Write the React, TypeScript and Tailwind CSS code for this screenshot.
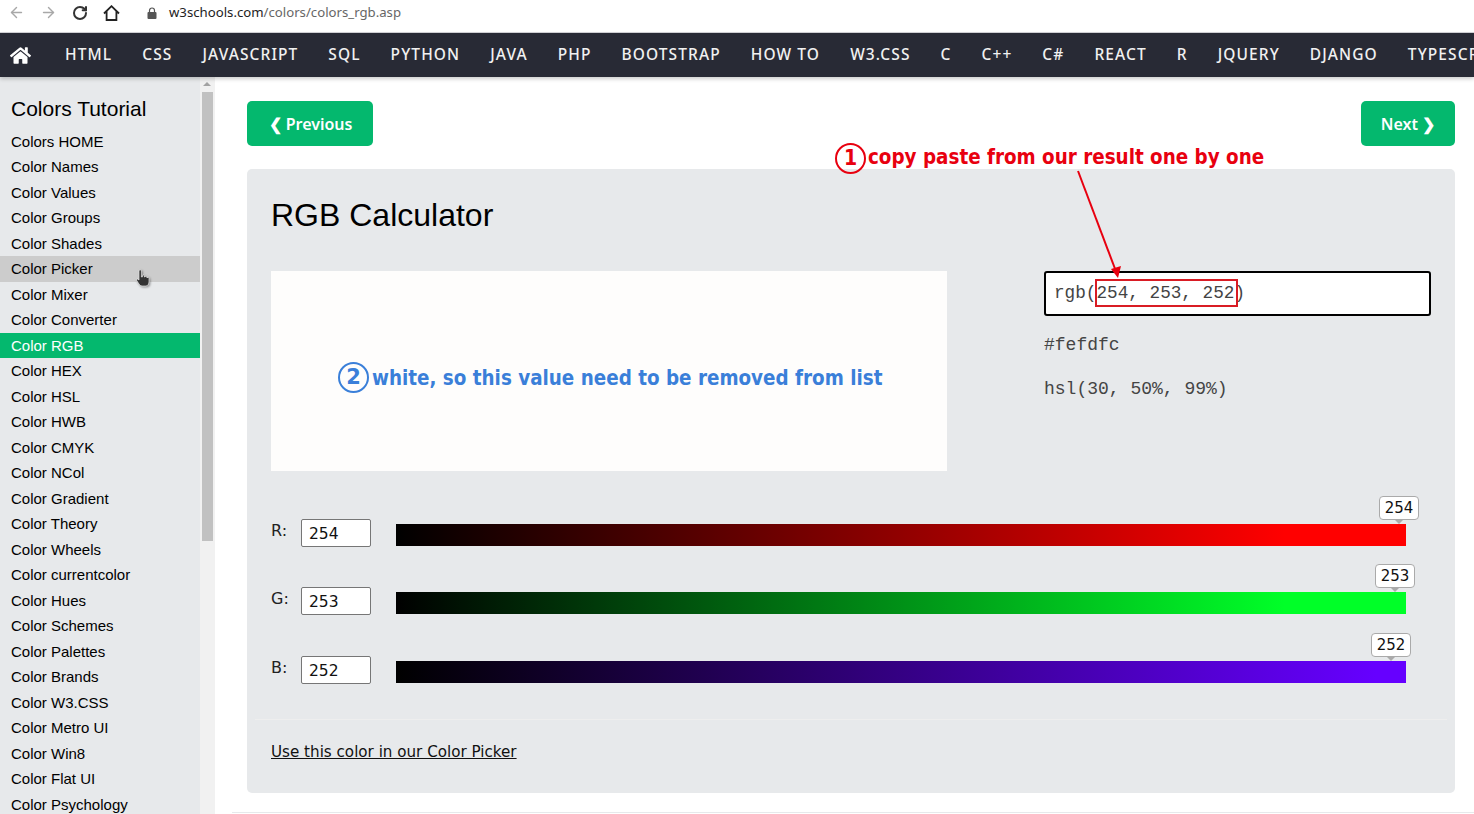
import React from 'react';
import { ArrowLeft, ArrowRight, RotateCw } from 'lucide-react';
import { FaHome } from 'react-icons/fa';

const navItems = ['HTML', 'CSS', 'JAVASCRIPT', 'SQL', 'PYTHON', 'JAVA', 'PHP', 'BOOTSTRAP', 'HOW TO', 'W3.CSS', 'C', 'C++', 'C#', 'REACT', 'R', 'JQUERY', 'DJANGO', 'TYPESCRIPT'];

const sideItems = ['Colors HOME', 'Color Names', 'Color Values', 'Color Groups', 'Color Shades', 'Color Picker', 'Color Mixer', 'Color Converter', 'Color RGB', 'Color HEX', 'Color HSL', 'Color HWB', 'Color CMYK', 'Color NCol', 'Color Gradient', 'Color Theory', 'Color Wheels', 'Color currentcolor', 'Color Hues', 'Color Schemes', 'Color Palettes', 'Color Brands', 'Color W3.CSS', 'Color Metro UI', 'Color Win8', 'Color Flat UI', 'Color Psychology'];

const sliders = [
    { label: 'R:', value: 254, bar: 'bg-[linear-gradient(to_right,#000000_0%,#ff0000_88%,#ff0000_100%)]', tip: 'right-[-13px]', mt: 'mt-0' },
    { label: 'G:', value: 253, bar: 'bg-[linear-gradient(to_right,#000000_0%,#00ff28_88%,#00ff28_100%)]', tip: 'right-[-9px]', mt: 'mt-10' },
    { label: 'B:', value: 252, bar: 'bg-[linear-gradient(to_right,#000000_0%,#6600ff_97%,#6600ff_100%)]', tip: 'right-[-5px]', mt: 'mt-[41px]' },
];

const App: React.FC = () => {
    return (
        <div className="relative w-[1474px] h-[814px] overflow-hidden bg-white flex flex-col font-['Liberation_Sans',sans-serif] text-black">
            {/* browser bar */}
            <div className="h-[33px] flex items-center shrink-0 pb-[7px] border-b border-[#d4d4d8]">
                <ArrowLeft className="ml-[8px] w-[17px] h-[17px] text-[#a8a8a8]" strokeWidth={2} />
                <ArrowRight className="ml-[15px] w-[17px] h-[17px] text-[#a8a8a8]" strokeWidth={2} />
                <RotateCw className="ml-[15px] w-[16px] h-[16px] text-[#333333]" strokeWidth={3} />
                <svg className="ml-[15px]" width="17" height="16" viewBox="0 0 17 16" fill="none" stroke="#222222" strokeWidth="1.8">
                    <path d="M1 8.5 L8.5 1.2 L16 8.5 M3.6 6.5 V15 H13.4 V6.5" />
                </svg>
                <svg className="ml-[27px]" width="10" height="12" viewBox="0 0 10 12">
                    <path d="M2.5 5 V3.5 a2.5 2.5 0 0 1 5 0 V5" fill="none" stroke="#555555" strokeWidth="1.2" />
                    <rect x="0.5" y="5" width="9" height="7" rx="1" fill="#555555" />
                </svg>
                <span className="ml-[12px] text-[13.2px] leading-none font-['Noto_Sans',sans-serif] text-[#222222]">
                    w3schools.com<span className="text-[#666666]">/colors/colors_rgb.asp</span>
                </span>
            </div>

            {/* top nav */}
            <div className="h-[44px] shrink-0 bg-[#282a35] flex items-center text-[#f1f1f1] overflow-hidden shadow-[0_2px_4px_rgba(0,0,0,0.2)] z-10">
                <FaHome className="ml-[10px] mr-[34px] w-[21px] h-[19px] shrink-0 text-white" />
                {navItems.map((item) => (
                    <span key={item} className="shrink-0 mr-[30px] text-[15.5px] leading-none font-medium tracking-[1.1px] font-['Noto_Sans',sans-serif] whitespace-nowrap">
                        {item}
                    </span>
                ))}
            </div>

            <div className="flex flex-1 min-h-0">
                {/* sidebar */}
                <div className="w-[200px] shrink-0 bg-[#e7e9eb] overflow-hidden pt-[19px]">
                    <h2 className="pl-[11px] text-[21px] leading-[26px] mb-[6.5px]">Colors Tutorial</h2>
                    {sideItems.map((item) => (
                        <div
                            key={item}
                            className={`relative h-[25.5px] pl-[11px] text-[15px] leading-[25.5px] whitespace-nowrap ${item === 'Color RGB' ? 'bg-[#04b86e] text-white' : item === 'Color Picker' ? 'bg-[#cccccc]' : ''}`}
                        >
                            {item}
                            {item === 'Color Picker' && (
                                <svg className="absolute left-[136px] top-[13px] drop-shadow-[1px_1px_1px_rgba(0,0,0,0.4)]" width="14" height="18" viewBox="0 0 14 18">
                                    <path
                                        d="M3 2 a1.2 1.2 0 0 1 2.4 0 V8 h1 V7 a1 1 0 0 1 2 0 V8 h.6 a1 1 0 0 1 2 .4 V9 a1 1 0 0 1 2 .3 V13 q0 4 -3 4 H6 q-2 0 -3 -2 L.7 11.5 q-.5 -1.5 1 -1.5 L3 11 Z"
                                        fill="#333333"
                                        stroke="#ffffff"
                                        strokeWidth="0.6"
                                    />
                                </svg>
                            )}
                        </div>
                    ))}
                </div>

                {/* scrollbar */}
                <div className="w-[15px] shrink-0 bg-[#f1f1f1] flex flex-col items-start">
                    <div className="ml-[3px] mt-[5px] w-0 h-0 border-x-[4px] border-x-transparent border-b-[4px] border-b-[#a3a3a3]" />
                    <div className="ml-[2px] mt-[6px] w-[11px] h-[449px] bg-[#c1c1c1]" />
                </div>

                {/* main */}
                <div className="flex-1 min-w-0 pl-[32px] pr-[19px] pt-[24px]">
                    <div className="flex justify-between">
                        <button className="w-[126px] h-[45px] pl-[1px] bg-[#04b86e] rounded-[5px] text-white text-[16px] font-semibold font-['Noto_Sans',sans-serif]">❮ Previous</button>
                        <button className="w-[94px] h-[45px] bg-[#04b86e] rounded-[5px] text-white text-[16px] font-semibold font-['Noto_Sans',sans-serif]">Next ❯</button>
                    </div>

                    <div className="mt-[23px] h-[624px] bg-[#e7e9eb] rounded-[5px] pt-[28px] font-['DejaVu_Sans',sans-serif]">
                        <h1 className="pl-[24px] text-[32px] leading-[37px] font-['Liberation_Sans',sans-serif]">RGB Calculator</h1>

                        <div className="flex mt-[37px] pl-[24px]">
                            <div className="w-[676px] h-[200px] bg-[#fefdfc]" />
                            <div className="ml-[97px] w-[387px] font-['Liberation_Mono',monospace] text-[#444444] text-[18px]">
                                <div className="h-[45px] bg-white border-2 border-black rounded-[3px] flex items-center pl-[8px] text-[17.7px]">
                                    rgb(254, 253, 252)
                                </div>
                                <div className="mt-[17px] leading-[24px]">#fefdfc</div>
                                <div className="mt-[20px] leading-[24px]">hsl(30, 50%, 99%)</div>
                            </div>
                        </div>

                        <div className="mt-[48px] pl-[24px] pr-[49px]">
                            {sliders.map((s) => (
                                <div key={s.label} className={`flex items-start h-[28px] ${s.mt}`}>
                                    <span className="w-[30px] text-[16px] leading-[24px] text-[#222222]">{s.label}</span>
                                    <div className="w-[70px] h-[28px] bg-white border border-[#767676] rounded-[2px] pl-[7px] text-[15.5px] leading-[28px] text-[#111111]">{s.value}</div>
                                    <div className={`relative ml-[25px] mt-[5px] flex-1 h-[22px] ${s.bar}`}>
                                        <div className={`absolute -top-[28px] ${s.tip} w-[40px] h-[24px] bg-white border border-[#aaaaaa] rounded-[4px] text-center text-[15px] leading-[22px] text-[#111111]`}>
                                            {s.value}
                                            <div className="absolute left-1/2 -translate-x-1/2 top-[22px] w-0 h-0 border-x-[5px] border-x-transparent border-t-[5px] border-t-[#aaaaaa]" />
                                        </div>
                                    </div>
                                </div>
                            ))}
                        </div>

                        <div className="mx-[8px] mt-[35px] border-t border-[#eeeeee]" />
                        <a className="block ml-[24px] mt-[20px] text-[15.15px] leading-[24px] underline text-[#111111]">Use this color in our Color Picker</a>
                    </div>
                </div>
            </div>

            <div className="absolute left-[232px] right-0 top-[812px] h-px bg-[#e7e9eb]" />

            {/* annotations drawn on top of the screenshot */}
            <div className="absolute left-[835px] top-[143px] w-[31px] h-[31px] rounded-full border-2 border-[#e8000f] text-[#e8000f] flex items-center justify-center font-bold text-[21px] font-['DejaVu_Sans_Condensed','DejaVu_Sans',sans-serif]">1</div>
            <div className="absolute left-[868px] top-[145px] text-[20.4px] leading-[24px] font-bold whitespace-nowrap text-[#e8000f] font-stretch-condensed font-['DejaVu_Sans_Condensed','DejaVu_Sans',sans-serif]">copy paste from our result one by one</div>
            <svg className="absolute left-[1070px] top-[168px]" width="56" height="114" viewBox="0 0 56 114" fill="none">
                <path d="M8 3 L47 106" stroke="#e8000f" strokeWidth="2" />
                <path d="M48 110 L41 101 L51 98 Z" fill="#e8000f" />
            </svg>
            <div className="absolute left-[1095px] top-[279px] w-[143px] h-[28px] border-2 border-[#d91c24]" />
            <div className="absolute left-[338px] top-[362px] w-[31px] h-[31px] rounded-full border-2 border-[#3a7fd9] text-[#3a7fd9] flex items-center justify-center font-bold text-[21px] font-['DejaVu_Sans',sans-serif]">2</div>
            <div className="absolute left-[372px] top-[366px] text-[20.4px] leading-[24px] font-bold whitespace-nowrap text-[#3a7fd9] font-stretch-condensed font-['DejaVu_Sans_Condensed','DejaVu_Sans',sans-serif]">white, so this value need to be removed from list</div>
        </div>
    );
};

export default App;
